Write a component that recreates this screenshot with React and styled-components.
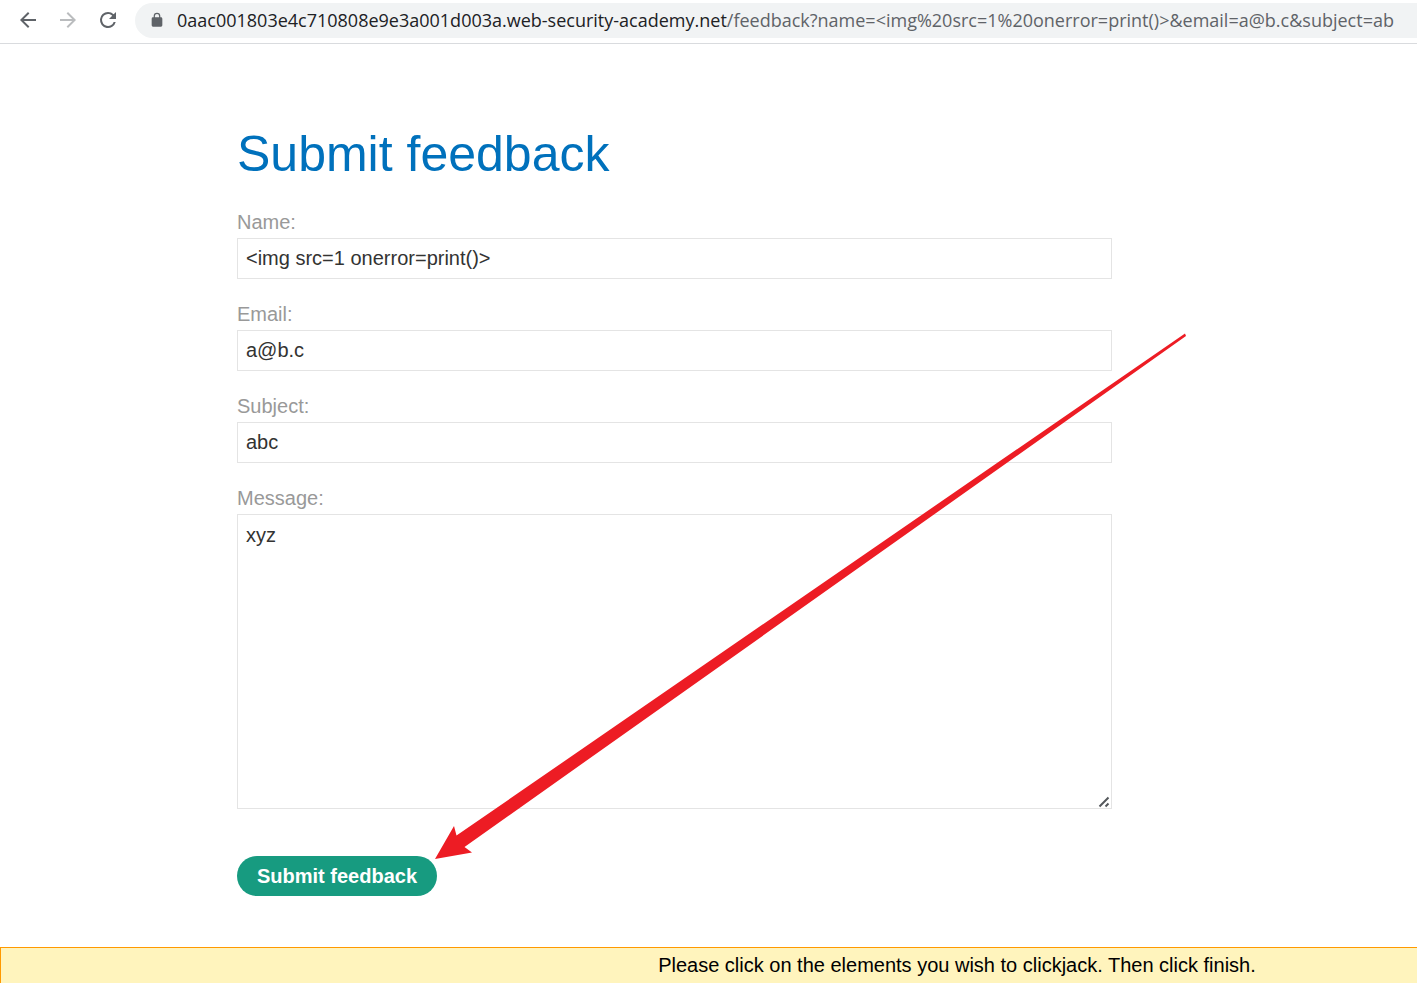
import React from "react";
import styled, { createGlobalStyle } from "styled-components";

const GlobalStyle = createGlobalStyle`
  *, *::before, *::after { box-sizing: border-box; }
  body {
    margin: 0;
    background: #fff;
    font-family: "Liberation Sans", Arial, sans-serif;
    font-size: 20px;
    line-height: 24px;
    color: #333332;
    overflow-x: hidden;
  }
`;

const Page = styled.div`
  display: flex;
  flex-direction: column;
  min-height: 100vh;
`;

const BrowserBar = styled.header`
  display: flex;
  align-items: center;
  height: 44px;
  padding: 0 0 3px 8px;
  border-bottom: 1px solid #d9dbde;
  overflow: hidden;
`;

const NavButton = styled.button`
  display: flex;
  align-items: center;
  justify-content: center;
  flex: none;
  width: 40px;
  height: 36px;
  padding: 0;
  border: 0;
  background: none;
  color: ${(p) => (p.disabled ? "#babcbe" : "#5f6368")};
`;

const Icon = styled.svg`
  display: block;
  flex: none;
  width: ${(p) => p.$size}px;
  height: ${(p) => p.$size}px;
  fill: currentColor;
`;

const AddressBar = styled.div`
  display: flex;
  align-items: center;
  flex: 1;
  min-width: 0;
  height: 35px;
  margin-left: 7px;
  padding-left: 14px;
  gap: 12px;
  border-radius: 18px 0 0 18px;
  background: #f1f3f4;
  color: #5f6368;
  overflow: hidden;
`;

const Url = styled.span`
  flex: none;
  white-space: nowrap;
  font-family: "Open Sans", "Noto Sans", sans-serif;
  font-size: 18px;
  line-height: 24px;
`;

const Host = styled.span`
  color: #202124;
`;

const Main = styled.main`
  position: relative;
  flex: 1;
  padding: 80px 305px 51px 237px;
`;

const Title = styled.h1`
  margin: 0 0 22px;
  font-size: 50px;
  line-height: 60px;
  font-weight: 400;
  color: #0071bc;
`;

const Form = styled.form`
  display: flex;
  flex-direction: column;
  gap: 19px;
`;

const Field = styled.div`
  position: relative;
  display: flex;
  flex-direction: column;
`;

const Label = styled.label`
  line-height: 32px;
  color: #999;
`;

const Input = styled.input`
  width: 100%;
  height: 41px;
  padding: 0 8px;
  border: 1px solid #e4e4e4;
  border-radius: 0;
  outline: 0;
  background: #fff;
  font: inherit;
  color: inherit;
`;

const TextArea = styled.textarea`
  display: block;
  width: 100%;
  height: 295px;
  padding: 8px;
  border: 1px solid #e4e4e4;
  border-radius: 0;
  outline: 0;
  resize: none;
  background: #fff;
  font: inherit;
  color: inherit;
`;

const ResizeGrip = styled.svg`
  position: absolute;
  right: 2px;
  bottom: 1px;
  width: 12px;
  height: 12px;
  pointer-events: none;
`;

const SubmitButton = styled.button`
  align-self: flex-start;
  height: 40px;
  margin-top: 28px;
  padding: 0 20px;
  border: 0;
  border-radius: 20px;
  background: #179b80;
  color: #fff;
  font: inherit;
  font-weight: 700;
`;

const Pointer = styled.svg`
  position: absolute;
  top: 286px;
  left: 432px;
  width: 758px;
  height: 532px;
  pointer-events: none;
`;

const Notice = styled.footer`
  padding: 5px 0 6px 35%;
  border-top: 1px solid #ff9900;
  border-left: 1px solid #ff9900;
  background: #fff4bd;
  color: #000;
  text-align: center;
`;

const fields = [
  { id: "name", label: "Name:", value: "<img src=1 onerror=print()>" },
  { id: "email", label: "Email:", value: "a@b.c" },
  { id: "subject", label: "Subject:", value: "abc" },
];

export default function App() {
  return (
    <>
      <GlobalStyle />
      <Page>
        <BrowserBar>
          <NavButton type="button" aria-label="Back">
            <Icon $size={24} viewBox="0 0 24 24">
              <path d="M20 11H7.8l5.6-5.6L12 4l-8 8 8 8 1.4-1.4L7.8 13H20z" />
            </Icon>
          </NavButton>
          <NavButton type="button" aria-label="Forward" disabled>
            <Icon $size={24} viewBox="0 0 24 24">
              <path d="M4 11h12.2l-5.6-5.6L12 4l8 8-8 8-1.4-1.4 5.6-5.6H4z" />
            </Icon>
          </NavButton>
          <NavButton type="button" aria-label="Reload">
            <Icon $size={24} viewBox="0 0 24 24">
              <path d="M17.65 6.35A7.96 7.96 0 0 0 12 4a8 8 0 1 0 7.73 10h-2.08A6 6 0 1 1 12 6c1.66 0 3.14.69 4.22 1.78L13 11h7V4z" />
            </Icon>
          </NavButton>
          <AddressBar>
            <Icon $size={16} viewBox="0 0 24 24">
              <path d="M18 8h-1V6A5 5 0 0 0 7 6v2H6a2 2 0 0 0-2 2v10a2 2 0 0 0 2 2h12a2 2 0 0 0 2-2V10a2 2 0 0 0-2-2zM8.9 8V6a3.1 3.1 0 0 1 6.2 0v2z" />
            </Icon>
            <Url>
              <Host>0aac001803e4c710808e9e3a001d003a.web-security-academy.net</Host>
              {"/feedback?name=<img%20src=1%20onerror=print()>&email=a@b.c&subject=ab"}
            </Url>
          </AddressBar>
        </BrowserBar>
        <Main>
          <Title>Submit feedback</Title>
          <Form onSubmit={(e) => e.preventDefault()}>
            {fields.map((f) => (
              <Field key={f.id}>
                <Label htmlFor={f.id}>{f.label}</Label>
                <Input id={f.id} name={f.id} defaultValue={f.value} />
              </Field>
            ))}
            <Field>
              <Label htmlFor="message">Message:</Label>
              <TextArea id="message" name="message" defaultValue="xyz" />
              <ResizeGrip viewBox="0 0 12 12" aria-hidden="true">
                <path d="M1.500 10.500l9-9M7.500 10.500l3-3" stroke="#55585c" strokeWidth="2" />
              </ResizeGrip>
            </Field>
            <SubmitButton type="submit">Submit feedback</SubmitButton>
          </Form>
          <Pointer viewBox="432 330 758 532" aria-hidden="true">
            <path
              d="M435 859L454 826L456.500 835.500L1185 333.500L1186 336L464.500 847L472 852.500Z"
              fill="#ed1c24"
            />
          </Pointer>
        </Main>
        <Notice>Please click on the elements you wish to clickjack. Then click finish.</Notice>
      </Page>
    </>
  );
}
